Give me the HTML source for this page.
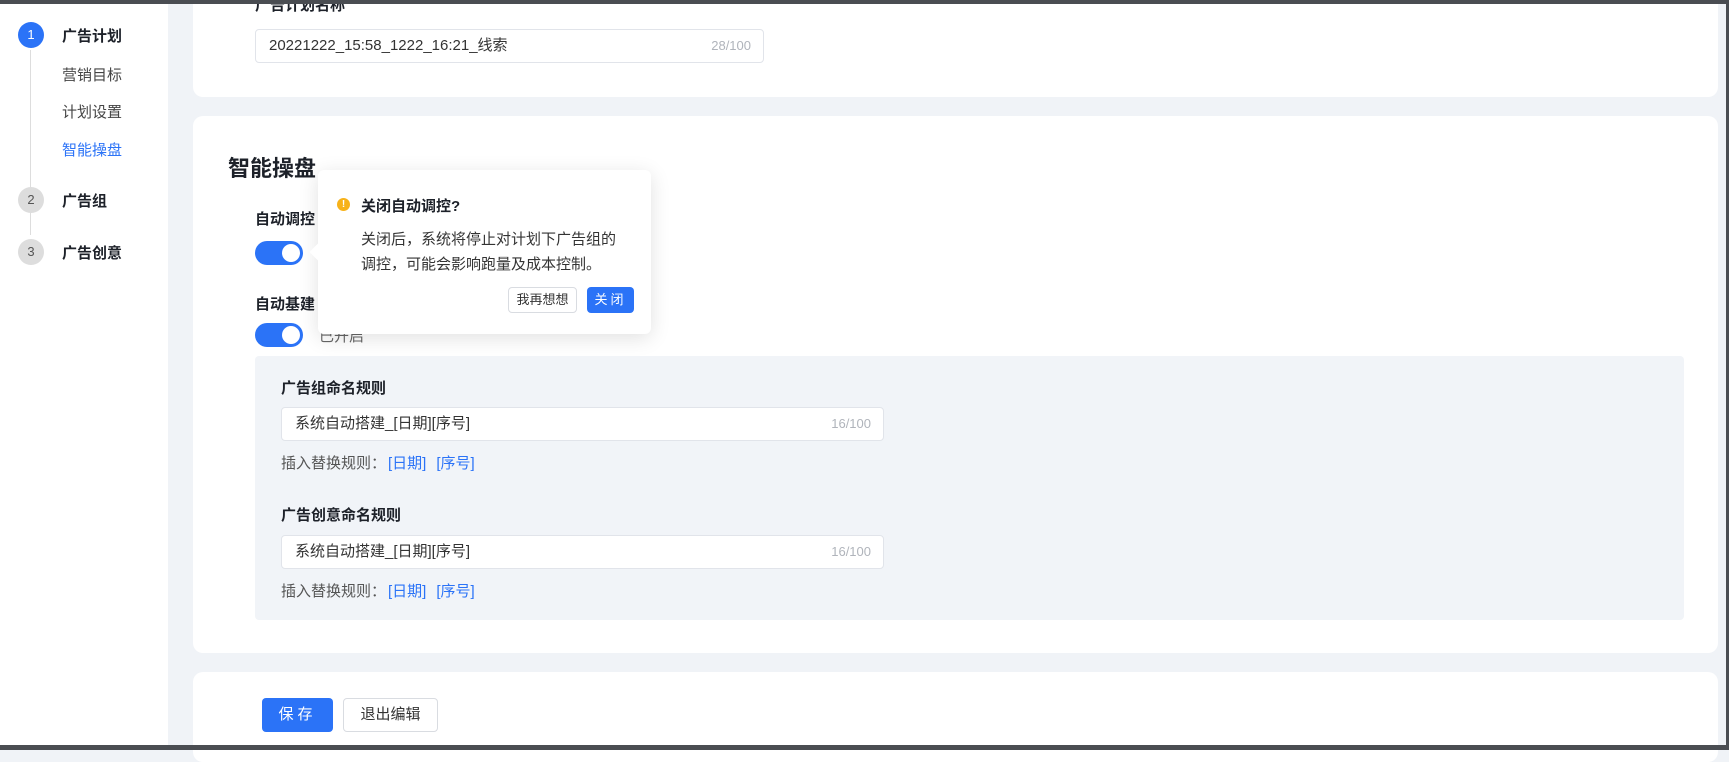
<!DOCTYPE html>
<html><head><meta charset="utf-8"><style>
*{box-sizing:border-box;margin:0;padding:0}
body{width:1729px;height:750px;overflow:hidden;background:#f0f3f7;font-family:"Liberation Sans","Noto Sans CJK SC",sans-serif;color:#1d2129;position:relative;font-size:15px}
.a{position:absolute}
.top{left:0;top:0;width:1729px;height:4px;background:#4a4d52}
.bot{left:0;top:745px;width:1729px;height:5px;background:#4a4d52}
.rline{left:1726px;top:0;width:3px;height:750px;background:#4a4d52}
.side{left:0;top:4px;width:168px;height:742px;background:#fff}
.circ{width:26px;height:26px;border-radius:50%;text-align:center;line-height:26px;font-size:13px}
.card{background:#fff;border-radius:10px;left:193px;width:1525px}
.inp{background:#fff;border:1px solid #e1e4ea;border-radius:4px;height:34px;line-height:32px;padding-left:13px;font-size:15px;color:#333}
.cnt{position:absolute;right:12px;top:0;color:#b0b4bb;font-size:13px}
.tog{width:48px;height:24px;border-radius:12px;background:#2b73f7}
.tog:after{content:"";position:absolute;right:3px;top:3px;width:18px;height:18px;border-radius:50%;background:#fff}
.lbl{font-size:15px;font-weight:bold;color:#1d2129}
.ins{font-size:15px;color:#555}
.ins b{color:#2b73f7;font-weight:normal;margin-left:10px}
</style></head><body>
<div class="a side"></div>
<div class="a" style="left:30px;top:50px;width:1px;height:185px;background:#ddd"></div>
<div class="a circ" style="left:18px;top:22px;background:#2b73f7;color:#fff">1</div>
<div class="a lbl" style="left:62px;top:25px;font-size:15px">广告计划</div>
<div class="a" style="left:62px;top:64px;color:#444">营销目标</div>
<div class="a" style="left:62px;top:101px;color:#444">计划设置</div>
<div class="a" style="left:62px;top:139px;color:#2b73f7">智能操盘</div>
<div class="a circ" style="left:18px;top:187px;background:#ddd;color:#555">2</div>
<div class="a lbl" style="left:62px;top:190px">广告组</div>
<div class="a circ" style="left:18px;top:239px;background:#ddd;color:#555">3</div>
<div class="a lbl" style="left:62px;top:242px">广告创意</div>

<div class="a card" style="top:-10px;height:107px"></div>
<div class="a lbl" style="left:255px;top:-6px">广告计划名称</div>
<div class="a inp" style="left:255px;top:29px;width:509px">20221222_15:58_1222_16:21_线索<span class="cnt">28/100</span></div>

<div class="a card" style="top:116px;height:537px"></div>
<div class="a" style="left:228px;top:151px;font-size:22px;font-weight:bold">智能操盘</div>
<div class="a lbl" style="left:255px;top:208px">自动调控</div>
<div class="a tog" style="left:255px;top:241px"></div>
<div class="a lbl" style="left:255px;top:293px">自动基建</div>
<div class="a tog" style="left:255px;top:323px"></div>
<div class="a" style="left:319px;top:325px;color:#666">已开启</div>
<div class="a" style="left:255px;top:356px;width:1429px;height:264px;background:#f1f4f8;border-radius:4px"></div>
<div class="a lbl" style="left:281px;top:377px">广告组命名规则</div>
<div class="a inp" style="left:281px;top:407px;width:603px">系统自动搭建_[日期][序号]<span class="cnt">16/100</span></div>
<div class="a ins" style="left:281px;top:452px">插入替换规则：<b style="margin-left:2px">[日期]</b><b>[序号]</b></div>
<div class="a lbl" style="left:281px;top:504px">广告创意命名规则</div>
<div class="a inp" style="left:281px;top:535px;width:603px">系统自动搭建_[日期][序号]<span class="cnt">16/100</span></div>
<div class="a ins" style="left:281px;top:580px">插入替换规则：<b style="margin-left:2px">[日期]</b><b>[序号]</b></div>

<div class="a card" style="top:672px;height:90px"></div>
<div class="a" style="left:262px;top:698px;width:71px;height:34px;background:#2b73f7;border-radius:4px;color:#fff;text-align:center;line-height:34px;letter-spacing:4px">保存</div>
<div class="a" style="left:343px;top:698px;width:95px;height:34px;border:1px solid #d9dce1;border-radius:4px;background:#fff;text-align:center;line-height:32px;color:#333">退出编辑</div>

<div class="a" style="left:318px;top:170px;width:333px;height:164px;background:#fff;border-radius:6px;box-shadow:0 4px 20px rgba(0,0,0,.12)"></div>
<div class="a" style="left:312px;top:246px;width:12px;height:12px;background:#fff;transform:rotate(45deg)"></div>
<div class="a" style="left:337px;top:198px;width:13px;height:13px;border-radius:50%;background:#f7b21a;color:#fff;font-size:10px;font-weight:bold;text-align:center;line-height:13px">!</div>
<div class="a lbl" style="left:361px;top:195px">关闭自动调控?</div>
<div class="a" style="left:361px;top:227px;color:#333;line-height:25px">关闭后，系统将停止对计划下广告组的<br>调控，可能会影响跑量及成本控制。</div>
<div class="a" style="left:508px;top:287px;width:69px;height:26px;border:1px solid #d9dce1;border-radius:4px;text-align:center;line-height:24px;font-size:13px;color:#333">我再想想</div>
<div class="a" style="left:587px;top:287px;width:47px;height:26px;background:#2b73f7;border-radius:4px;text-align:center;line-height:26px;font-size:13px;color:#fff;letter-spacing:3px">关闭</div>

<div class="a top"></div><div class="a bot"></div><div class="a rline"></div>
</body></html>
